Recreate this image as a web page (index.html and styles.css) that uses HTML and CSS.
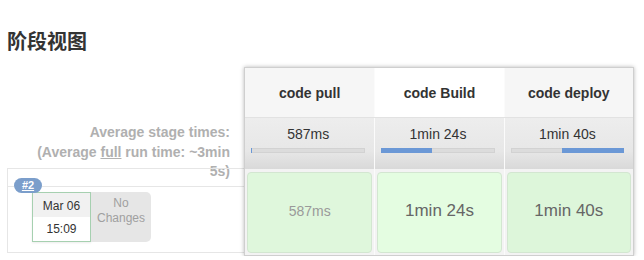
FILE: index.html
```html
<!DOCTYPE html>
<html>
<head>
    <title>阶段视图</title>
    <meta charset="UTF-8">
    <link rel="stylesheet" href="styles.css">
</head>
<body>
    <div class="page">
        <h2 class="title">阶段视图</h2>
        <div class="stage-view">
            <div class="side">
                <div class="avg-label">Average stage times:<br>(Average <u>full</u> run time: ~3min 5s)</div>
                <div class="build-row">
                    <div class="build-row-top"></div>
                    <div class="build-info">
                        <a class="badge" href="#">#2</a>
                        <div class="date-box">
                            <div class="date">Mar 06</div>
                            <div class="time">15:09</div>
                        </div>
                        <div class="changes">No<br>Changes</div>
                    </div>
                </div>
            </div>

            <div class="stages">
                <div class="row head">
                    <div class="cell">code pull</div>
                    <div class="cell hover">code Build</div>
                    <div class="cell">code deploy</div>
                </div>
                <div class="row avg">
                    <div class="cell">
                        <div class="avg-time">587ms</div>
                        <div class="bar"><div class="bar-fill" style="margin-left:0%;width:1%"></div></div>
                    </div>
                    <div class="cell">
                        <div class="avg-time">1min 24s</div>
                        <div class="bar"><div class="bar-fill" style="margin-left:0%;width:45%"></div></div>
                    </div>
                    <div class="cell">
                        <div class="avg-time">1min 40s</div>
                        <div class="bar"><div class="bar-fill" style="margin-left:45%;width:55%"></div></div>
                    </div>
                </div>
                <div class="row run">
                    <div class="cell"><div class="run-cell small">587ms</div></div>
                    <div class="cell"><div class="run-cell light">1min 24s</div></div>
                    <div class="cell"><div class="run-cell">1min 40s</div></div>
                </div>
            </div>
        </div>
    </div>
</body>
</html>
```

FILE: styles.css
```css
body {
    margin: 0;
    font-family: "Liberation Sans", Arial, sans-serif;
    color: #333;
    background-color: #fff;
}
.page {
    padding: 0 7px;
}
.title {
    margin: 0;
    padding-top: 27px;
    font-family: "Noto Sans CJK SC", sans-serif;
    font-size: 20px;
    line-height: 28px;
    font-weight: bold;
    color: #333;
}
.stage-view {
    display: flex;
    margin-top: 12px;
}
.side {
    width: 237px;
    flex: none;
}
.avg-label {
    height: 101px;
    box-sizing: border-box;
    padding: 56px 14px 0 23px;
    text-align: right;
    font-size: 14px;
    font-weight: bold;
    line-height: 19.5px;
    color: #b0b0b0;
}
.build-row {
    position: relative;
    height: 85px;
    box-sizing: border-box;
    margin-right: -40px;
    border: 1px solid #e6e6e6;
}
.build-row-top {
    height: 17px;
    border-bottom: 1px solid #e6e6e6;
}
.build-info {
    display: flex;
    padding: 5px 0 0 24px;
}
.badge {
    position: absolute;
    left: 6px;
    top: 9px;
    width: 28px;
    height: 15px;
    border-radius: 8px;
    background-color: #7b9ecb;
    color: #fff;
    font-size: 11px;
    font-weight: bold;
    line-height: 15px;
    text-align: center;
    z-index: 1;
}
.date-box {
    width: 59px;
    height: 50px;
    box-sizing: border-box;
    border: 1px solid #a6d0b0;
    background-color: #fff;
    box-shadow: 0 1px 2px rgba(0,0,0,0.08);
    font-size: 12px;
    text-align: center;
}
.date {
    height: 24px;
    line-height: 26px;
    background-color: #f1f1f1;
}
.time {
    height: 24px;
    line-height: 24px;
}
.changes {
    width: 60px;
    height: 50px;
    box-sizing: border-box;
    padding-top: 4px;
    border-radius: 0 5px 5px 0;
    background-color: #e6e6e6;
    color: #a0a0a0;
    font-size: 12px;
    line-height: 15px;
    text-align: center;
}
.stages {
    position: relative;
    z-index: 2;
    width: 390px;
    box-sizing: border-box;
    border: 1px solid #cfcfcf;
    box-shadow: 0 0 4px rgba(0,0,0,0.28);
    background-color: #f3f3f3;
    align-self: flex-start;
}
.row {
    display: grid;
    grid-template-columns: 1fr 1fr 1fr;
}
.head {
    height: 49px;
    border-bottom: 1px solid #e2e2e2;
}
.head .cell {
    display: flex;
    align-items: center;
    justify-content: center;
    background-color: #f6f6f6;
    font-size: 14px;
    font-weight: bold;
    color: #333;
}
.head .cell + .cell,
.avg .cell + .cell,
.run .cell + .cell {
    border-left: 1px solid #fbfbfb;
}
.head .cell.hover {
    background-color: #fff;
}
.avg {
    height: 51px;
}
.avg .cell {
    padding: 8px 9px 0 6px;
    background: linear-gradient(to bottom, #ededed 0%, #e7e7e7 65%, #d9d9d9 100%);
}
.avg-time {
    font-size: 14px;
    line-height: 16px;
    text-align: center;
    color: #333;
}
.bar {
    display: flex;
    height: 5px;
    margin-top: 6px;
    background-color: #dcdcdc;
    box-shadow: inset 0 0 0 1px #d2d2d2;
}
.bar-fill {
    height: 100%;
    min-width: 1px;
    background-color: #6b98d6;
}
.run {
    height: 86px;
}
.run .cell {
    padding: 3px 2px 2px 2px;
}
.run-cell {
    height: 100%;
    box-sizing: border-box;
    padding-bottom: 4px;
    border: 1px solid #d3e6d1;
    border-radius: 4px;
    background-color: #ddf6da;
    display: flex;
    align-items: center;
    justify-content: center;
    font-size: 17px;
    color: #666;
}
.run-cell.light {
    background-color: #e4fde1;
}
.run-cell.small {
    font-size: 14px;
    color: #9a9a9a;
    background-color: #dff7dc;
}
```
